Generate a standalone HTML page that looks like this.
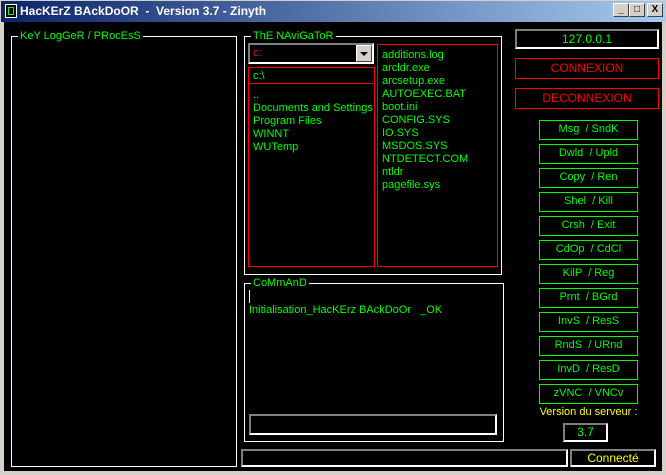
<!DOCTYPE html>
<html><head><meta charset="utf-8"><style>
*{box-sizing:border-box;margin:0;padding:0}
body{width:666px;height:475px;background:#d4d0c8;position:relative;overflow:hidden;font-family:"Liberation Sans",sans-serif;font-size:11px;color:#00ff00}
.a{position:absolute}
#tb{left:0;top:0;width:666px;height:22px;background:linear-gradient(90deg,#0a246a,#a6caf0);border:1px solid #d4d0c8;border-bottom:none}
#tt{left:20px;top:4px;color:#fff;font-weight:bold;font-size:12px;white-space:pre}
.wb{top:3px;width:16px;height:14px;background:#d4d0c8;border:1px solid;border-color:#fff #404040 #404040 #fff;color:#000;font-size:10px;font-weight:bold;text-align:center;line-height:12px}
#cl{left:4px;top:22px;width:658px;height:449px;background:#000}
.g{border:1px solid #fff}
.lg{background:#000;padding:0 2px;top:-8px;left:6px;position:absolute;line-height:14px;white-space:nowrap}
.r{border:1px solid #f00}
.btn{left:539px;width:99px;height:20px;border:1px solid #00ff00;text-align:center;line-height:17px;white-space:pre}
.sunk{border:2px solid;border-color:#808080 #fff #fff #808080}
.li{line-height:13px;white-space:nowrap}
</style></head><body>
<div id="tb" class="a"></div>
<div class="a" style="left:5px;top:4px;width:12px;height:14px;background:#000;border:1px solid #fff"><div style="margin:2px;width:6px;height:8px;border:1px solid #0f0"></div></div>
<div id="tt" class="a">HacKErZ BAckDoOR  -  Version 3.7 - Zinyth</div>
<div class="a wb" style="left:613px">_</div>
<div class="a wb" style="left:629px">□</div>
<div class="a wb" style="left:647px">X</div>
<div id="cl" class="a"></div>

<div class="a g" style="left:11px;top:36px;width:226px;height:431px"><span class="lg">KeY LogGeR / PRocEsS</span></div>

<div class="a g" style="left:244px;top:36px;width:258px;height:239px"><span class="lg">ThE NAviGaToR</span></div>
<div class="a sunk" style="left:248px;top:43px;width:126px;height:21px;background:#000;color:#f00;padding:2px 3px">c:</div>
<div class="a" style="left:356px;top:45px;width:16px;height:17px;background:#d4d0c8;border:1px solid;border-color:#fff #404040 #404040 #fff"><div style="margin:6px auto 0;width:0;height:0;border-left:4px solid transparent;border-right:4px solid transparent;border-top:4px solid #000"></div></div>
<div class="a r" style="left:248px;top:67px;width:127px;height:17px;padding:2px 4px;line-height:12px">c:\</div>
<div class="a r" style="left:248px;top:83px;width:127px;height:184px;padding:5px 4px">
<div class="li">..</div><div class="li">Documents and Settings</div><div class="li">Program Files</div><div class="li">WINNT</div><div class="li">WUTemp</div></div>
<div class="a r" style="left:377px;top:44px;width:121px;height:223px;padding:4px 4px">
<div class="li">additions.log</div><div class="li">arcldr.exe</div><div class="li">arcsetup.exe</div><div class="li">AUTOEXEC.BAT</div><div class="li">boot.ini</div><div class="li">CONFIG.SYS</div><div class="li">IO.SYS</div><div class="li">MSDOS.SYS</div><div class="li">NTDETECT.COM</div><div class="li">ntldr</div><div class="li">pagefile.sys</div></div>

<div class="a g" style="left:244px;top:283px;width:260px;height:159px"><span class="lg">CoMmAnD</span></div>
<div class="a" style="left:249px;top:290px;width:1px;height:13px;background:#fff"></div>
<div class="a li" style="left:249px;top:304px">Initialisation_HacKErz BAckDoOr &nbsp;&nbsp;_OK</div>
<div class="a sunk" style="left:249px;top:414px;width:248px;height:21px"></div>

<div class="a sunk" style="left:241px;top:449px;width:327px;height:18px"></div>
<div class="a sunk" style="left:570px;top:449px;width:86px;height:18px;color:#ff0;text-align:center;line-height:14px;font-size:12px">Connecté</div>

<div class="a sunk" style="left:515px;top:29px;width:144px;height:20px;text-align:center;line-height:16px;font-size:12px">127.0.0.1</div>
<div class="a r" style="left:515px;top:58px;width:144px;height:21px;color:#f00;text-align:center;line-height:19px;font-size:12px">CONNEXION</div>
<div class="a r" style="left:515px;top:88px;width:144px;height:21px;color:#f00;text-align:center;line-height:19px;font-size:12px">DECONNEXION</div>

<div class="a btn" style="top:120px">Msg  / SndK</div>
<div class="a btn" style="top:144px">Dwld  / Upld</div>
<div class="a btn" style="top:168px">Copy  / Ren</div>
<div class="a btn" style="top:192px">Shel  / Kill</div>
<div class="a btn" style="top:216px">Crsh  / Exit</div>
<div class="a btn" style="top:240px">CdOp  / CdCl</div>
<div class="a btn" style="top:264px">KilP  / Reg</div>
<div class="a btn" style="top:288px">Prnt  / BGrd</div>
<div class="a btn" style="top:312px">InvS  / ResS</div>
<div class="a btn" style="top:336px">RndS  / URnd</div>
<div class="a btn" style="top:360px">InvD  / ResD</div>
<div class="a btn" style="top:384px">zVNC  / VNCv</div>
<div class="a" style="left:520px;top:406px;width:137px;text-align:center;color:#ff0;white-space:nowrap">Version du serveur :</div>
<div class="a sunk" style="left:563px;top:423px;width:45px;height:19px;text-align:center;line-height:15px;font-size:12px">3.7</div>
</body></html>
